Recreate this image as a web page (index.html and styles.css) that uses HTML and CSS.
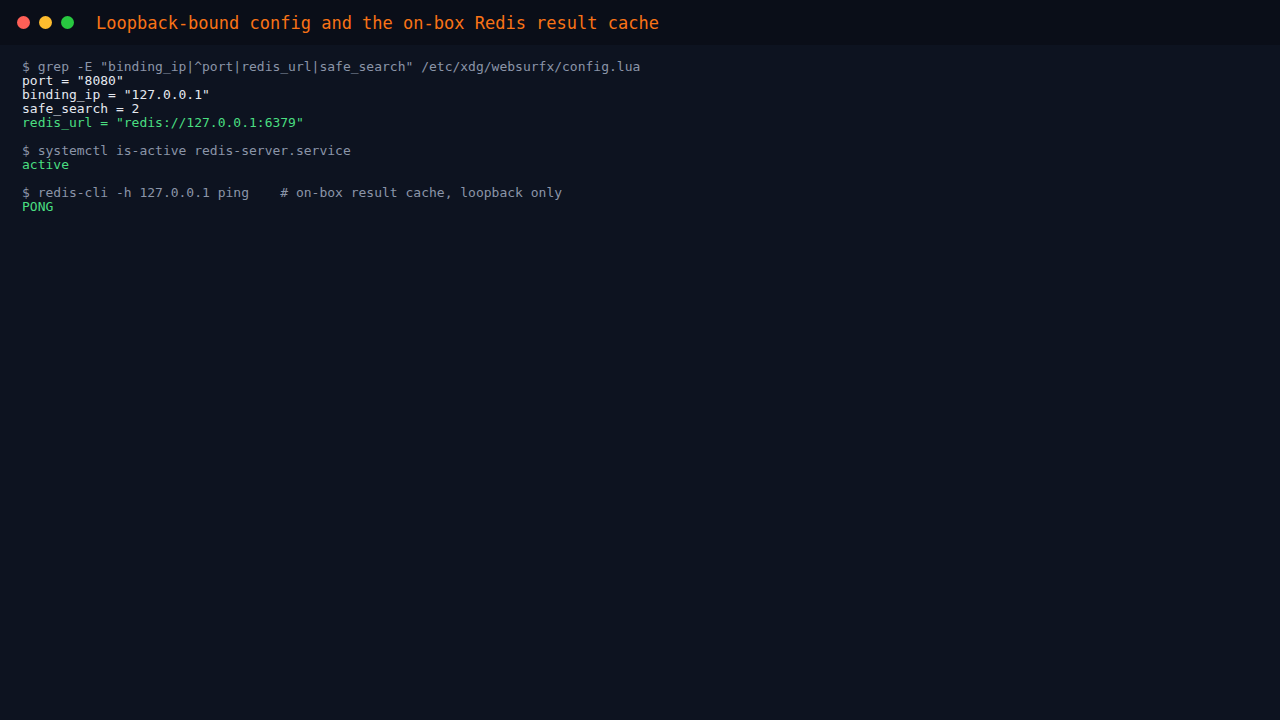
FILE: index.html
```html
<!DOCTYPE html>
<html>
<head>
<meta charset="utf-8">
<link rel="stylesheet" href="styles.css">
</head>
<body>
<div class="window">
  <header class="titlebar">
    <div class="dots">
      <span class="dot red"></span>
      <span class="dot yellow"></span>
      <span class="dot green"></span>
    </div>
    <h1 class="title">Loopback-bound config and the on-box Redis result cache</h1>
  </header>
  <main class="terminal">
<pre class="output"><span class="cmd">$ grep -E "binding_ip|^port|redis_url|safe_search" /etc/xdg/websurfx/config.lua</span>
<span class="out">port = "8080"</span>
<span class="out">binding_ip = "127.0.0.1"</span>
<span class="out">safe_search = 2</span>
<span class="ok">redis_url = "redis://127.0.0.1:6379"</span>

<span class="cmd">$ systemctl is-active redis-server.service</span>
<span class="ok">active</span>

<span class="cmd">$ redis-cli -h 127.0.0.1 ping    # on-box result cache, loopback only</span>
<span class="ok">PONG</span></pre>
  </main>
</div>
</body>
</html>
```
FILE: styles.css
```css
html, body {
  margin: 0;
  padding: 0;
  height: 100%;
  background: #0d1320;
}
.window {
  display: flex;
  flex-direction: column;
  height: 100%;
  font-family: "DejaVu Sans Mono", "Liberation Mono", monospace;
}
.titlebar {
  display: flex;
  align-items: center;
  height: 45px;
  padding: 0 0 0 17px;
  background: #0a0e18;
  box-sizing: border-box;
}
.dots {
  display: flex;
  gap: 9px;
  margin-bottom: 1px;
}
.dot {
  width: 13px;
  height: 13px;
  border-radius: 50%;
  display: block;
}
.red { background: #ff5f57; }
.yellow { background: #febc2e; }
.green { background: #28c840; }
.title {
  margin: 0 0 0 22px;
  font-size: 17px;
  font-weight: normal;
  color: #f97316;
  line-height: 20px;
}
.terminal {
  flex: 1;
  padding: 15px 22px;
}
.output {
  margin: 0;
  font-family: inherit;
  font-size: 13px;
  line-height: 14px;
}
.cmd { color: #8b95a8; }
.out { color: #e5e9f0; }
.ok { color: #4ade80; }
```
